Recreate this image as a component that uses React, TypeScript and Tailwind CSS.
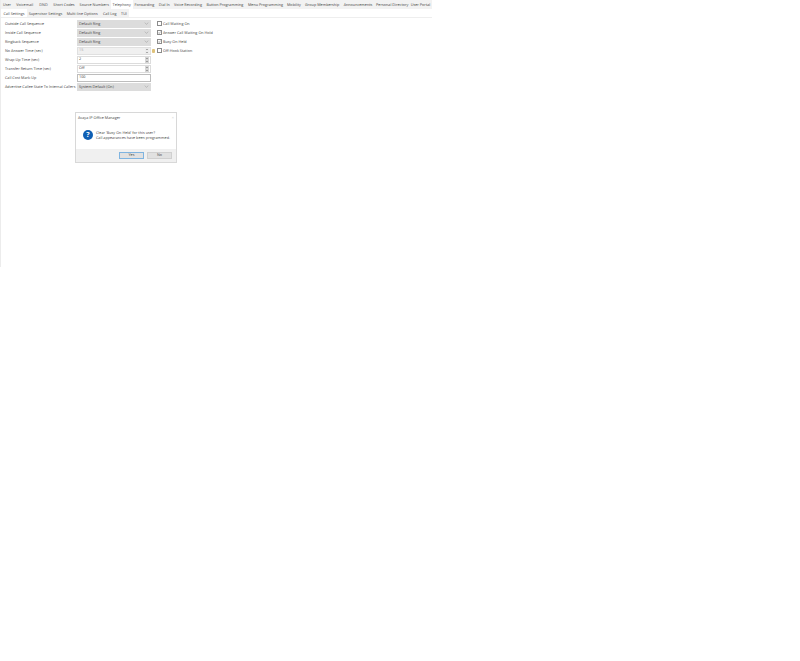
const font = { fontFamily: '"Open Sans", "Noto Sans", Arial, sans-serif' };

const topTabs: [string, number, boolean?][] = [
  ['User', 12],
  ['Voicemail', 23.5],
  ['DND', 14],
  ['Short Codes', 27],
  ['Source Numbers', 33.5],
  ['Telephony', 21.5, true],
  ['Forwarding', 24],
  ['Dial In', 15.5],
  ['Voice Recording', 32],
  ['Button Programming', 42],
  ['Menu Programming', 39],
  ['Mobility', 18],
  ['Group Membership', 38.5],
  ['Announcements', 33],
  ['Personal Directory', 35.5],
  ['User Portal', 21],
];

const subTabs: [string, number, boolean?][] = [
  ['Call Settings', 26, true],
  ['Supervisor Settings', 37],
  ['Multi-line Options', 36.5],
  ['Call Log', 18.5],
  ['TUI', 10],
];

function Chevron() {
  return (
    <svg width="5" height="3" viewBox="0 0 5 3" className="mr-[2px] shrink-0">
      <path d="M0.7 0.7 L2.5 2.3 L4.3 0.7" fill="none" stroke="#999" strokeWidth="0.5" />
    </svg>
  );
}

function Select({ value }: { value: string }) {
  return (
    <div className="flex h-[8px] w-[74px] items-center justify-between bg-[#dcdcdc] pl-[2px]">
      <span className="pt-[2px]">{value}</span>
      <Chevron />
    </div>
  );
}

function Spin({ value, disabled }: { value: string; disabled?: boolean }) {
  return (
    <div className={`flex h-[8px] w-[74px] items-center justify-between border ${disabled ? 'border-[#e0e0e0] bg-[#f0f0f0] text-[#aaa]' : 'border-[#dcdcdc] bg-white'}`}>
      <span className="pl-[1px] pt-[1px]">{value}</span>
      <div className={`mr-[1px] flex h-full w-[4px] flex-col items-center justify-around ${disabled ? 'bg-[#ececec]' : 'bg-[#d6d6d6]'}`}>
        <span className="h-0 w-0 border-x-[1.5px] border-b-[1.5px] border-x-transparent border-b-[#666]" />
        <span className="h-0 w-0 border-x-[1.5px] border-t-[1.5px] border-x-transparent border-t-[#666]" />
      </div>
    </div>
  );
}

function Row({ label, children, after }: { label: string; children: React.ReactNode; after?: React.ReactNode }) {
  return (
    <div className="flex h-[9px] items-center">
      <span className="w-[72px] shrink-0 whitespace-nowrap pt-[2px]">{label}</span>
      {children}
      {after}
    </div>
  );
}

function Check({ label, checked }: { label: string; checked?: boolean }) {
  return (
    <div className="flex h-[9px] items-center gap-[1px]">
      <span className="flex h-[5px] w-[5px] items-center justify-center border border-[#8c8c8c] bg-white">
        {checked && (
          <svg width="3" height="3" viewBox="0 0 3 3">
            <path d="M0.3 1.5 L1.2 2.5 L2.7 0.5" fill="none" stroke="#666" strokeWidth="0.5" />
          </svg>
        )}
      </span>
      <span className="whitespace-nowrap pt-[2px]">{label}</span>
    </div>
  );
}

export default function App() {
  return (
    <div className="relative min-h-[661px] bg-white text-[3.75px] leading-none text-[#444] antialiased [text-rendering:geometricPrecision]" style={font}>
      <div className="flex h-[267px] w-[432px] flex-col border-l border-[#ececec]">
        <div className="flex h-[9px] shrink-0 items-stretch bg-[#f2f2f2]">
          {topTabs.map(([name, w, active]) => (
            <div key={name} className={`flex items-center justify-center whitespace-nowrap pt-[2px] ${active ? 'bg-white' : ''}`} style={{ width: w }}>
              {name}
            </div>
          ))}
        </div>
        <div className="flex h-[9px] shrink-0 items-stretch border-b border-[#eeeeee] bg-white">
          {subTabs.map(([name, w, active]) => (
            <div key={name} className={`flex items-center justify-center whitespace-nowrap pt-[3px] ${active ? 'bg-white' : 'bg-[#f2f2f2]'}`} style={{ width: w }}>
              {name}
            </div>
          ))}
        </div>
        <div className="flex pl-[4px] pt-[1px]">
          <div className="flex w-[152px] flex-col">
            <Row label="Outside Call Sequence"><Select value="Default Ring" /></Row>
            <Row label="Inside Call Sequence"><Select value="Default Ring" /></Row>
            <Row label="Ringback Sequence"><Select value="Default Ring" /></Row>
            <Row label="No Answer Time (sec)" after={<span className="ml-[1px] h-[4px] w-[3px] rounded-[1px] bg-[#dfc27a]" />}><Spin value="15" disabled /></Row>
            <Row label="Wrap-Up Time (sec)"><Spin value="2" /></Row>
            <Row label="Transfer Return Time (sec)"><Spin value="Off" /></Row>
            <Row label="Call Cost Mark-Up">
              <div className="flex h-[8px] w-[74px] items-center border border-[#bdbdbd] bg-white pl-[1px] pt-[1px]">100</div>
            </Row>
            <Row label="Advertise Callee State To Internal Callers"><Select value="System Default (On)" /></Row>
          </div>
          <div className="flex flex-col">
            <Check label="Call Waiting On" />
            <Check label="Answer Call Waiting On Hold" checked />
            <Check label="Busy On Held" checked />
            <Check label="Off-Hook Station" />
          </div>
        </div>
      </div>

      <div className="absolute left-[75px] top-[112px] flex h-[51px] w-[102px] flex-col border border-[#d8d8d8] bg-white">
        <div className="flex h-[8px] items-end justify-between px-[2px]">
          <span>Avaya IP Office Manager</span>
          <span className="text-[#ccc]">×</span>
        </div>
        <div className="flex flex-1 items-center gap-[3px] pl-[7px]">
          <span className="flex h-[10px] w-[10px] shrink-0 items-center justify-center rounded-full bg-[#0f5fb4] text-[7px] font-bold text-white">?</span>
          <div className="flex flex-col gap-[1px] whitespace-nowrap pt-[3px]">
            <span>Clear 'Busy On Held' for this user?</span>
            <span>Call appearances have been programmed.</span>
          </div>
        </div>
        <div className="flex h-[13px] items-center justify-end gap-[3px] bg-[#f0f0f0] pb-[1px] pr-[4px]">
          <div className="flex h-[7px] w-[25px] items-center justify-center border border-[#7fb4e0] bg-[#e1e1e1] pt-[1px]">Yes</div>
          <div className="flex h-[7px] w-[25px] items-center justify-center border border-[#d0d0d0] bg-[#e1e1e1] pt-[1px]">No</div>
        </div>
      </div>
    </div>
  );
}
